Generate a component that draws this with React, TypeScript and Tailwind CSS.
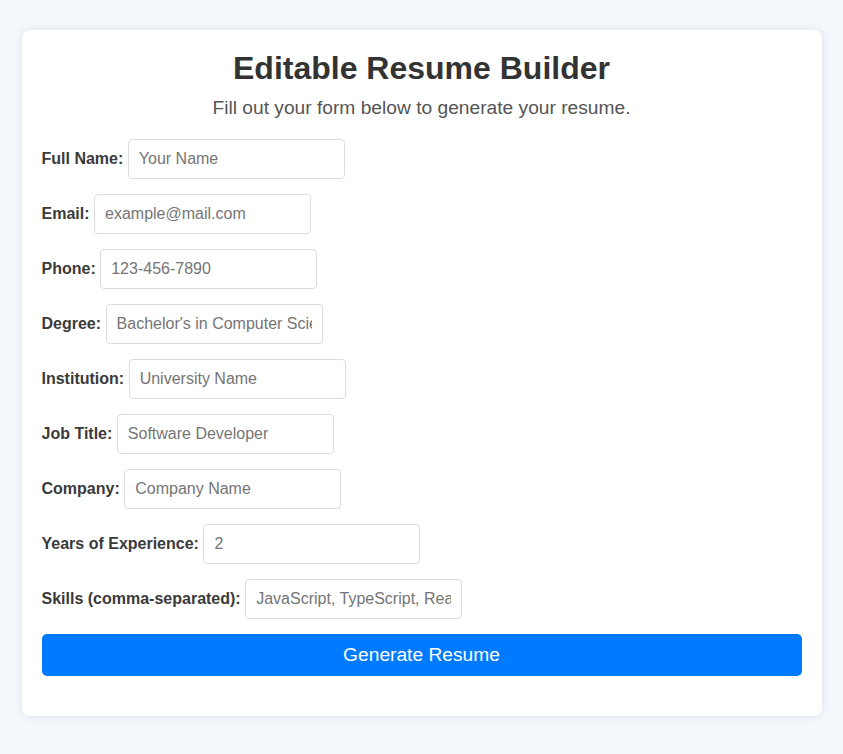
import React from "react";

const fields: { label: string; placeholder: string; type?: string }[] = [
  { label: "Full Name:", placeholder: "Your Name" },
  { label: "Email:", placeholder: "example@mail.com", type: "email" },
  { label: "Phone:", placeholder: "123-456-7890" },
  { label: "Degree:", placeholder: "Bachelor's in Computer Science" },
  { label: "Institution:", placeholder: "University Name" },
  { label: "Job Title:", placeholder: "Software Developer" },
  { label: "Company:", placeholder: "Company Name" },
  { label: "Years of Experience:", placeholder: "2", type: "number" },
  { label: "Skills (comma-separated):", placeholder: "JavaScript, TypeScript, React" },
];

export default function App() {
  return (
    <div className="min-h-[754px] bg-[#f4f7fb] pt-[30px] pb-[38px] font-['Liberation_Sans',Arial,sans-serif]">
      <div className="mx-auto w-[800px] rounded-[8px] bg-white px-[20px] pt-[20px] pb-[40px] shadow-[0_0_10px_rgba(0,0,0,0.1)]">
        <h1 className="m-0 text-center text-[32px] font-bold leading-[37px] text-[#333]">
          Editable Resume Builder
        </h1>
        <p className="mt-[10px] mb-[20px] text-center text-[19.2px] leading-[22px] text-[#555]">
          Fill out your form below to generate your resume.
        </p>
        <form onSubmit={(e) => e.preventDefault()}>
          {fields.map((f) => (
            <div key={f.label} className="mb-[15px] flex items-center">
              <label className="mr-[4.5px] text-[16px] font-bold text-[#3a3a3a]">{f.label}</label>
              <input
                type={f.type === "number" ? "text" : f.type ?? "text"}
                placeholder={f.placeholder}
                className="h-[40px] w-[217px] rounded-[4px] border border-[#ddd] bg-white px-[10px] text-[16px] text-[#333] outline-none placeholder:text-[#757575]"
              />
            </div>
          ))}
          <button
            type="submit"
            className="h-[42px] w-full rounded-[5px] bg-[#007bff] text-[19.2px] text-white"
          >
            Generate Resume
          </button>
        </form>
      </div>
    </div>
  );
}
